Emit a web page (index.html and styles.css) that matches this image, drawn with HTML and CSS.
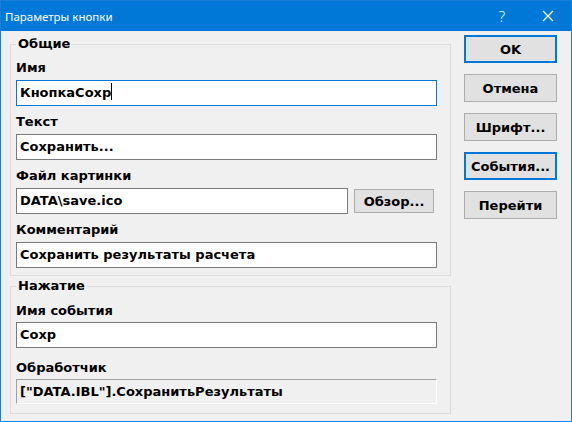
FILE: index.html
```html
<!DOCTYPE html>
<html lang="ru">

<head>
    <meta charset="UTF-8">
    <link rel="stylesheet" href="styles.css">
</head>

<body>
    <div class="window">
        <div class="titlebar">
            <span class="title">Параметры кнопки</span>
            <span class="help">?</span>
            <span class="close">
                <svg width="12" height="12" viewBox="0 0 12 12">
                    <path d="M1 1 L11 11 M11 1 L1 11" stroke="#ffffff" stroke-width="1.1" fill="none"/>
                </svg>
            </span>
        </div>
        <div class="client">
            <div class="groups">
                <fieldset class="group">
                    <legend>Общие</legend>
                    <div class="label">Имя</div>
                    <div class="field focused">КнопкаСохр<span class="caret"></span></div>
                    <div class="label">Текст</div>
                    <div class="field">Сохранить...</div>
                    <div class="label">Файл картинки</div>
                    <div class="row">
                        <div class="field short">DATA\save.ico</div>
                        <div class="btn small">Обзор...</div>
                    </div>
                    <div class="label">Комментарий</div>
                    <div class="field last">Сохранить результаты расчета</div>
                </fieldset>
                <fieldset class="group second">
                    <legend>Нажатие</legend>
                    <div class="label">Имя события</div>
                    <div class="field">Сохр</div>
                    <div class="label">Обработчик</div>
                    <div class="field readonly last">["DATA.IBL"].СохранитьРезультаты</div>
                </fieldset>
            </div>
            <div class="buttons">
                <div class="btn default">OK</div>
                <div class="btn">Отмена</div>
                <div class="btn">Шрифт...</div>
                <div class="btn default">События...</div>
                <div class="btn">Перейти</div>
            </div>
        </div>
    </div>
</body>
</html>
```

FILE: styles.css
```css
* {
    box-sizing: border-box;
}
body {
    margin: 0;
    font-family: "DejaVu Sans", Tahoma, sans-serif;
    font-size: 13px;
    color: #000000;
}
.window {
    width: 572px;
    height: 422px;
    border: 1px solid #1a7fd6;
    background-color: #f0f0f0;
    display: flex;
    flex-direction: column;
}
.titlebar {
    height: 30px;
    background-color: #0078d7;
    color: #ffffff;
    display: flex;
    align-items: center;
    padding-left: 4px;
    font-family: "Noto Sans", sans-serif;
    font-size: 11.5px;
}
.title {
    flex: 1;
}
.help {
    width: 46px;
    text-align: center;
    font-size: 15px;
    font-weight: 300;
}
.close {
    width: 46px;
    display: flex;
    justify-content: center;
}
.client {
    flex: 1;
    display: flex;
    gap: 13px;
    padding: 4px 0 0 9px;
}
.groups {
    width: 441px;
    display: flex;
    flex-direction: column;
    gap: 2px;
    padding-top: 1px;
}
.group {
    margin: 0;
    border: 1px solid #dcdcdc;
    padding: 8px 13px 7px 5px;
}
.group.second {
    padding-top: 9px;
    padding-bottom: 9px;
}
legend {
    padding: 0 2px;
    font-weight: bold;
    line-height: 16px;
}
.label {
    font-weight: bold;
    line-height: 16px;
    margin-bottom: 4px;
}
.second .label {
    margin-bottom: 3px;
}
.field {
    height: 26px;
    border: 1px solid #7a7a7a;
    background-color: #ffffff;
    padding: 0 3px;
    line-height: 24px;
    font-weight: bold;
    margin-bottom: 8px;
    white-space: nowrap;
}
.second .field {
    margin-bottom: 12px;
}
.field.last, .second .field.last {
    margin-bottom: 0;
}
.field.focused {
    border-color: #0078d7;
}
.caret {
    display: inline-block;
    width: 1px;
    height: 17px;
    background-color: #000000;
    vertical-align: -3px;
}
.field.readonly {
    height: 25px;
    background-color: #f0f0f0;
    border-color: #a0a0a0 #ffffff #ffffff #a0a0a0;
    line-height: 23px;
}
.row {
    display: flex;
    align-items: center;
    gap: 6px;
    margin-bottom: 8px;
}
.row .field {
    margin-bottom: 0;
}
.field.short {
    width: 332px;
}
.buttons {
    display: flex;
    flex-direction: column;
    gap: 11px;
}
.btn {
    width: 93px;
    height: 28px;
    border: 1px solid #adadad;
    background-color: #e1e1e1;
    font-weight: bold;
    display: flex;
    align-items: center;
    justify-content: center;
}
.btn.default {
    border: 2px solid #0078d7;
}
.btn.small {
    width: 80px;
    height: 24px;
}
```
